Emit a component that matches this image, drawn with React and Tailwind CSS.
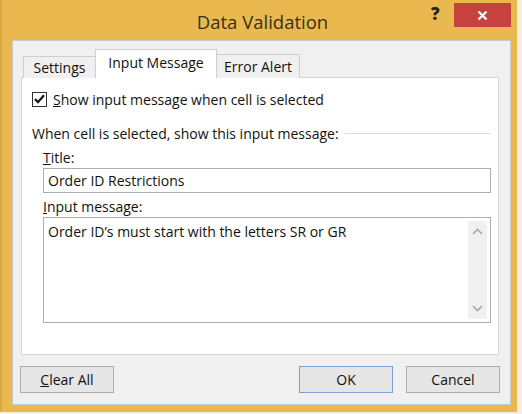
import React from "react";

const font = { fontFamily: '"Open Sans", "Noto Sans", Arial, sans-serif' };

function Chevron({ up }) {
  return (
    <svg width="11" height="7" viewBox="0 0 11 7">
      <path
        d={up ? "M1 6 L5.5 1.5 L10 6" : "M1 1 L5.5 5.5 L10 1"}
        fill="none"
        stroke="#a8a8a8"
        strokeWidth="1.6"
      />
    </svg>
  );
}

export default function App() {
  return (
    <div className="w-[522px] h-[414px] bg-[#f6efdf] overflow-hidden text-[#111]" style={font}>
      <div className="w-[517px] h-[412px] bg-[#e9b94f] border-l-2 border-[#dcaa42] flex flex-col relative">
        {/* title bar */}
        <div className="h-[40px] flex items-center justify-center pl-[6px] pt-[4px]">
          <span className="text-[18.5px] text-[#3a2e1c]">Data Validation</span>
        </div>
        <span className="absolute left-[429px] top-[1px] text-[17px] font-extrabold text-[#2c2417]">?</span>
        <div className="absolute left-[452px] top-[3px] w-[57px] h-[24px] bg-[#c7423f] flex items-center justify-center">
          <svg width="11" height="11" viewBox="0 0 11 11">
            <path d="M1.5 1.5 L9.5 9.5 M9.5 1.5 L1.5 9.5" stroke="#fff" strokeWidth="2.2" />
          </svg>
        </div>

        {/* client */}
        <div className="ml-[10px] w-[499px] h-[365px] bg-[#f0f0f0] border border-[#c9c9c9] flex flex-col text-[14px]">
          {/* tabs */}
          <div className="h-[36px] pl-[10px] flex items-end relative z-10">
            <div className="h-[22px] w-[73px] border border-b-0 border-[#cfcfcf] bg-[#f0f0f0] flex items-start pt-[0px] justify-center mb-[-1px]">
              Settings
            </div>
            <div className="h-[29px] w-[122px] border border-b-0 border-[#cfcfcf] bg-white flex items-start pt-[2px] justify-center mb-[-1px] ml-[-1px]">
              Input Message
            </div>
            <div className="h-[24px] w-[84px] border border-b-0 border-[#cfcfcf] bg-[#f0f0f0] flex items-start pt-[1px] justify-center mb-[-1px] ml-[-1px]">
              Error Alert
            </div>
          </div>
          {/* panel */}
          <div className="ml-[8px] w-[478px] h-[278px] bg-white border border-[#d5d5d5] flex flex-col pl-[10px]">
            <div className="flex items-center mt-[12px] h-[18px]">
              <div className="w-[15px] h-[15px] border border-[#333] bg-white flex items-center justify-center">
                <svg width="11" height="10" viewBox="0 0 11 10">
                  <path d="M1 5 L4 8.2 L10 1.2" fill="none" stroke="#111" strokeWidth="2.2" />
                </svg>
              </div>
              <span className="ml-[6px]"><span className="underline">S</span>how input message when cell is selected</span>
            </div>
            <div className="flex items-center mt-[16px] h-[18px] pr-[8px]">
              <span>When cell is selected, show this input message:</span>
              <div className="flex-1 h-px bg-[#dadada] ml-[6px]" />
            </div>
            <div className="ml-[11px] mt-[6px] h-[18px] flex items-center">
              <span><span className="underline">T</span>itle:</span>
            </div>
            <div className="ml-[11px] mt-[2px] w-[448px] h-[25px] border border-[#abadb3] flex items-center pl-[4px]">
              Order ID Restrictions
            </div>
            <div className="ml-[11px] mt-[4px] h-[18px] flex items-center">
              <span><span className="underline">I</span>nput message:</span>
            </div>
            <div className="ml-[11px] mt-[2px] w-[448px] h-[106px] border border-[#abadb3] flex pl-[4px] pt-[3px] pr-[3px] pb-[3px]">
              <div className="flex-1">Order ID’s must start with the letters SR or GR</div>
              <div className="w-[19px] bg-[#f0f0f0] flex flex-col items-center justify-between py-[7px]">
                <Chevron up />
                <Chevron />
              </div>
            </div>
          </div>
          {/* buttons */}
          <div className="flex mt-[11px] pl-[7px] pr-[10px]">
            <div className="w-[94px] h-[27px] border border-[#adadad] bg-[#e6e6e6] flex items-center justify-center">
              <span><span className="underline">C</span>lear All</span>
            </div>
            <div className="flex-1" />
            <div className="w-[94px] h-[27px] border border-[#7fa1cc] bg-[#e6e6e6] flex items-center justify-center">
              OK
            </div>
            <div className="w-[94px] h-[27px] border border-[#adadad] bg-[#e6e6e6] flex items-center justify-center ml-[13px]">
              Cancel
            </div>
          </div>
        </div>
      </div>
    </div>
  );
}
